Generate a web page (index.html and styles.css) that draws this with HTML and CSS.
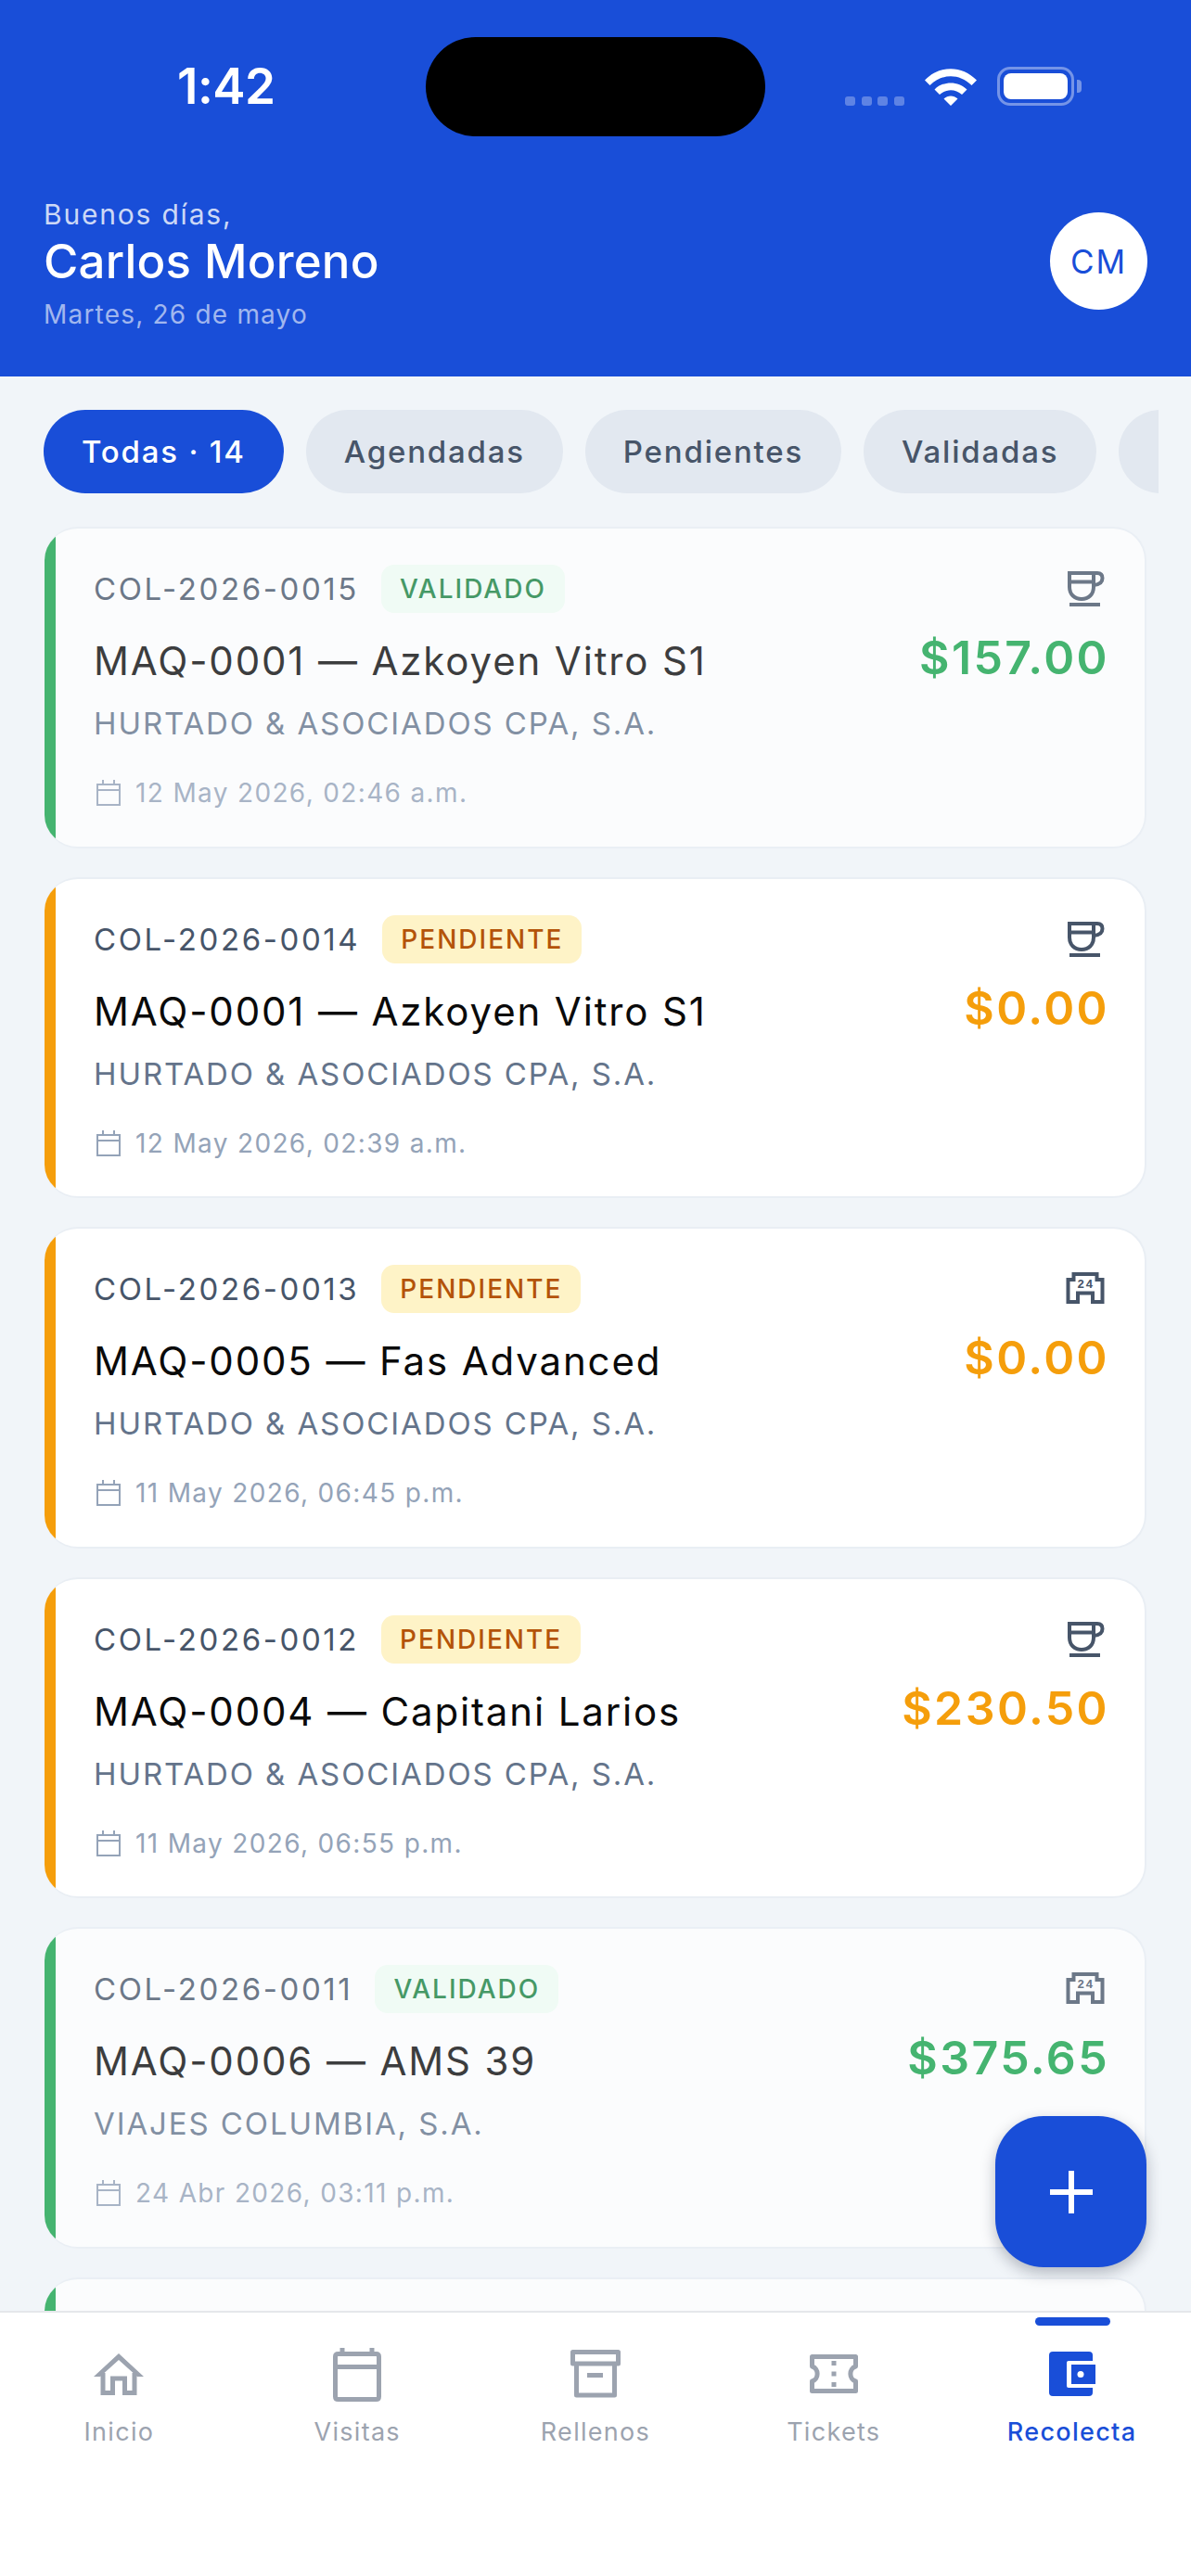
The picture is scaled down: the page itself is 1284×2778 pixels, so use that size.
FILE: index.html
```html
<!DOCTYPE html>
<html lang="es">
<head>
    <meta charset="utf-8">
    <title>Recolecta</title>
    <link rel="stylesheet" href="styles.css">
</head>
<body>
    <svg class="icon-defs" width="0" height="0">
        <symbol id="cup" viewBox="0 0 44 44">
            <path d="M5 5H31V20C31 28 25.500 33 18 33C10.500 33 5 28 5 20Z M5 14.500H31 M31 5H35C38.500 5 40.500 7 40.500 10.500C40.500 14.500 37.500 17.500 31 18" fill="none" stroke="currentColor" stroke-width="4"/>
            <rect x="5" y="37" width="33" height="4" fill="currentColor"/>
        </symbol>
        <symbol id="calendar" viewBox="0 0 28 30">
            <path d="M2 6H26V28H2Z M2 12H26 M8 1V6 M20 1V6" fill="none" stroke="currentColor" stroke-width="2"/>
        </symbol>
    </svg>

    <div class="phone">
        <header class="header">
            <div class="status">
                <div class="status-time">1:42</div>
                <div class="island"></div>
                <div class="status-icons">
                    <div class="dots"><span></span><span></span><span></span><span></span></div>
                    <svg class="wifi" width="56" height="40" viewBox="0 0 56 40">
                        <path d="M0 12.500C16 -4 40 -4 56 12.500L50.500 18C37 5 19 5 5.500 18Z M10.500 22.500C20 13 36 13 45.500 22.500L40 28C33 21.500 23 21.500 16 28Z M20.500 32.500C25 28.500 31 28.500 35.500 32.500L28 40Z" fill="#fff"/>
                    </svg>
                    <div class="battery"><div class="battery-fill"></div></div>
                    <div class="battery-nub"></div>
                </div>
            </div>
            <div class="greeting">
                <div>
                    <div class="greeting-hello">Buenos días,</div>
                    <div class="greeting-name">Carlos Moreno</div>
                    <div class="greeting-date">Martes, 26 de mayo</div>
                </div>
                <div class="avatar">CM</div>
            </div>
        </header>

        <main class="content">
            <div class="chips">
                <div class="chip chip-active">Todas · 14</div>
                <div class="chip">Agendadas</div>
                <div class="chip">Pendientes</div>
                <div class="chip">Validadas</div>
                <div class="chip chip-more"></div>
            </div>

            <div class="list">
                <article class="card card-validated">
                    <div class="card-stripe"></div>
                    <div class="card-body">
                        <div class="card-main">
                            <div class="card-top">
                                <span class="card-id">COL-2026-0015</span>
                                <span class="badge badge-validated">VALIDADO</span>
                            </div>
                            <div class="card-title">MAQ-0001 — Azkoyen Vitro S1</div>
                            <div class="card-company">HURTADO &amp; ASOCIADOS CPA, S.A.</div>
                            <div class="card-date">
                                <svg class="date-icon"><use href="#calendar"/></svg>
                                12 May 2026, 02:46 a.m.
                            </div>
                        </div>
                        <div class="card-side">
                            <svg class="type-icon"><use href="#cup"/></svg>
                            <div class="amount">$157.00</div>
                        </div>
                    </div>
                </article>

                <article class="card card-pending">
                    <div class="card-stripe"></div>
                    <div class="card-body">
                        <div class="card-main">
                            <div class="card-top">
                                <span class="card-id">COL-2026-0014</span>
                                <span class="badge badge-pending">PENDIENTE</span>
                            </div>
                            <div class="card-title">MAQ-0001 — Azkoyen Vitro S1</div>
                            <div class="card-company">HURTADO &amp; ASOCIADOS CPA, S.A.</div>
                            <div class="card-date">
                                <svg class="date-icon"><use href="#calendar"/></svg>
                                12 May 2026, 02:39 a.m.
                            </div>
                        </div>
                        <div class="card-side">
                            <svg class="type-icon"><use href="#cup"/></svg>
                            <div class="amount">$0.00</div>
                        </div>
                    </div>
                </article>

                <article class="card card-pending">
                    <div class="card-stripe"></div>
                    <div class="card-body">
                        <div class="card-main">
                            <div class="card-top">
                                <span class="card-id">COL-2026-0013</span>
                                <span class="badge badge-pending">PENDIENTE</span>
                            </div>
                            <div class="card-title">MAQ-0005 — Fas Advanced</div>
                            <div class="card-company">HURTADO &amp; ASOCIADOS CPA, S.A.</div>
                            <div class="card-date">
                                <svg class="date-icon"><use href="#calendar"/></svg>
                                11 May 2026, 06:45 p.m.
                            </div>
                        </div>
                        <div class="card-side">
                            <svg class="type-icon" viewBox="0 0 44 44">
                                <path d="M9.500 6H34.500V12H40.500V36H30V26.500H14V36H3.500V12H9.500Z" fill="none" stroke="currentColor" stroke-width="4"/>
                                <text x="22.500" y="21" text-anchor="middle" class="store-hours">24</text>
                            </svg>
                            <div class="amount">$0.00</div>
                        </div>
                    </div>
                </article>

                <article class="card card-pending">
                    <div class="card-stripe"></div>
                    <div class="card-body">
                        <div class="card-main">
                            <div class="card-top">
                                <span class="card-id">COL-2026-0012</span>
                                <span class="badge badge-pending">PENDIENTE</span>
                            </div>
                            <div class="card-title">MAQ-0004 — Capitani Larios</div>
                            <div class="card-company">HURTADO &amp; ASOCIADOS CPA, S.A.</div>
                            <div class="card-date">
                                <svg class="date-icon"><use href="#calendar"/></svg>
                                11 May 2026, 06:55 p.m.
                            </div>
                        </div>
                        <div class="card-side">
                            <svg class="type-icon"><use href="#cup"/></svg>
                            <div class="amount">$230.50</div>
                        </div>
                    </div>
                </article>

                <article class="card card-validated">
                    <div class="card-stripe"></div>
                    <div class="card-body">
                        <div class="card-main">
                            <div class="card-top">
                                <span class="card-id">COL-2026-0011</span>
                                <span class="badge badge-validated">VALIDADO</span>
                            </div>
                            <div class="card-title">MAQ-0006 — AMS 39</div>
                            <div class="card-company">VIAJES COLUMBIA, S.A.</div>
                            <div class="card-date">
                                <svg class="date-icon"><use href="#calendar"/></svg>
                                24 Abr 2026, 03:11 p.m.
                            </div>
                        </div>
                        <div class="card-side">
                            <svg class="type-icon" viewBox="0 0 44 44">
                                <path d="M9.500 6H34.500V12H40.500V36H30V26.500H14V36H3.500V12H9.500Z" fill="none" stroke="currentColor" stroke-width="4"/>
                                <text x="22.500" y="21" text-anchor="middle" class="store-hours">24</text>
                            </svg>
                            <div class="amount">$375.65</div>
                        </div>
                    </div>
                </article>

                <article class="card card-validated">
                    <div class="card-stripe"></div>
                </article>
            </div>

            <button class="fab">
                <svg width="46" height="46" viewBox="0 0 46 46"><path d="M23 0V46 M0 23H46" stroke="#fff" stroke-width="6"/></svg>
            </button>
        </main>

        <nav class="nav">
            <div class="nav-item">
                <svg class="nav-icon" viewBox="0 0 60 60">
                    <path d="M13 29V50.500H23.500V35H36.500V50.500H47V29" fill="none" stroke="currentColor" stroke-width="5"/>
                    <path d="M30 8L57 33H50L30 15L10 33H3Z" fill="currentColor"/>
                </svg>
                <span>Inicio</span>
            </div>
            <div class="nav-item">
                <svg class="nav-icon" viewBox="0 0 60 60">
                    <path d="M6.500 11.500Q6.500 8.500 9.500 8.500H50.500Q53.500 8.500 53.500 11.500V54.500Q53.500 57.500 50.500 57.500H9.500Q6.500 57.500 6.500 54.500Z M6.500 22.500H53.500 M14 2V8 M46 2V8" fill="none" stroke="currentColor" stroke-width="5"/>
                </svg>
                <span>Visitas</span>
            </div>
            <div class="nav-item">
                <svg class="nav-icon" viewBox="0 0 60 60">
                    <path d="M5.500 6.500H54.500V19H5.500Z M9.500 19V53H50.500V19" fill="none" stroke="currentColor" stroke-width="5" stroke-linejoin="round"/>
                    <rect x="21" y="29" width="17" height="5" fill="currentColor"/>
                </svg>
                <span>Rellenos</span>
            </div>
            <div class="nav-item">
                <svg class="nav-icon" viewBox="0 0 60 60">
                    <path d="M6.500 11.500H53.500V22C46 24 46 36 53.500 38V48.500H6.500V38C14 36 14 24 6.500 22Z" fill="none" stroke="currentColor" stroke-width="5" stroke-linejoin="round"/>
                    <rect x="27.500" y="16" width="5" height="5" fill="currentColor"/>
                    <rect x="27.500" y="27.500" width="5" height="5" fill="currentColor"/>
                    <rect x="27.500" y="39" width="5" height="5" fill="currentColor"/>
                </svg>
                <span>Tickets</span>
            </div>
            <div class="nav-item nav-item-active">
                <div class="nav-indicator"></div>
                <svg class="nav-icon" viewBox="0 0 60 60">
                    <rect x="5" y="6" width="47" height="48" rx="4" fill="currentColor"/>
                    <rect x="24" y="16" width="31" height="29" rx="2" fill="#fff"/>
                    <rect x="29" y="20" width="26" height="21" fill="currentColor"/>
                    <circle cx="39" cy="30.500" r="3.500" fill="#fff"/>
                </svg>
                <span>Recolecta</span>
            </div>
        </nav>
    </div>
</body>
</html>
```

FILE: styles.css
```css
* {
    box-sizing: border-box;
}
body {
    margin: 0;
    font-family: Inter, "Noto Sans", sans-serif;
    background-color: #f1f5f9;
}
.icon-defs {
    display: block;
    height: 0;
}
.store-hours {
    font-family: "Liberation Mono", monospace;
    font-size: 13px;
    font-weight: 700;
    letter-spacing: 1.500px;
    fill: currentColor;
}
.phone {
    position: relative;
    width: 1284px;
    height: 2778px;
    display: flex;
    flex-direction: column;
    overflow: hidden;
}

/* header */
.header {
    height: 406px;
    flex-shrink: 0;
    background-color: #194ed8;
    color: #fff;
    padding-top: 40px;
}
.status {
    display: flex;
    height: 107px;
}
.status-time {
    width: 459px;
    padding: 23px 0 0 191px;
    font-size: 53px;
    line-height: 60px;
    font-weight: 600;
    letter-spacing: -0.5px;
}
.island {
    width: 366px;
    height: 107px;
    border-radius: 54px;
    background-color: #000;
}
.status-icons {
    display: flex;
    align-items: flex-end;
    height: 74px;
    padding-left: 86px;
}
.dots {
    display: flex;
    gap: 6.5px;
    margin-right: 22px;
}
.dots span {
    width: 11px;
    height: 10px;
    border-radius: 3px;
    background-color: rgba(255, 255, 255, 0.3);
}
.wifi {
    margin-right: 22px;
}
.battery {
    width: 83px;
    height: 42px;
    padding: 4px;
    border: 3px solid rgba(255, 255, 255, 0.4);
    border-radius: 14px;
}
.battery-fill {
    height: 100%;
    border-radius: 8px;
    background-color: #fff;
}
.battery-nub {
    width: 5px;
    height: 14px;
    margin: 0 0 14px 3px;
    border-radius: 0 4px 4px 0;
    background-color: rgba(255, 255, 255, 0.4);
}
.greeting {
    display: flex;
    justify-content: space-between;
    align-items: flex-start;
    padding: 65px 47px 0;
}
.greeting-hello {
    font-size: 30px;
    line-height: 38px;
    letter-spacing: 1.800px;
    color: rgba(255, 255, 255, 0.8);
}
.greeting-name {
    font-size: 51px;
    line-height: 64px;
    font-weight: 450;
    letter-spacing: 0.2px;
}
.greeting-date {
    margin-top: 7px;
    font-size: 28px;
    line-height: 36px;
    letter-spacing: 1.200px;
    color: rgba(255, 255, 255, 0.6);
}
.avatar {
    width: 105px;
    height: 105px;
    margin-top: 17px;
    display: flex;
    align-items: center;
    justify-content: center;
    border-radius: 50%;
    background-color: #fff;
    color: #194ed8;
    font-size: 35px;
    letter-spacing: 2px;
}

/* filter chips */
.content {
    position: relative;
    flex: 1;
    overflow: hidden;
}
.chips {
    display: flex;
    gap: 24px;
    width: 1202px;
    margin: 36px 0 0 47px;
    overflow: hidden;
}
.chip {
    height: 90px;
    flex-shrink: 0;
    padding: 0 41px;
    display: flex;
    align-items: center;
    border-radius: 45px;
    background-color: #e2e8f0;
    color: #475569;
    font-size: 33px;
    font-weight: 450;
    letter-spacing: 1.800px;
}
.chip-active {
    background-color: #194ed8;
    color: #fff;
}
.chip-more {
    width: 200px;
}

/* cards */
.list {
    display: flex;
    flex-direction: column;
    gap: 31.1px;
    padding: 36px 48px 0;
}
.card {
    display: flex;
    flex-shrink: 0;
    height: 346.5px;
    border: 2px solid #e9eef4;
    border-left: none;
    border-radius: 36px;
    background-color: #fff;
    overflow: hidden;
}
.card-stripe {
    width: 12px;
    flex-shrink: 0;
}
.card-body {
    flex: 1;
    display: flex;
    justify-content: space-between;
    padding: 39px 38px 0 41px;
}
.card-validated {
    opacity: 0.78;
}
.card-validated .card-stripe {
    background-color: #16a34a;
}
.card-pending .card-stripe {
    background-color: #f59e0b;
}
.card-top {
    display: flex;
    align-items: center;
    gap: 24px;
    height: 52px;
}
.card-id {
    font-size: 33px;
    letter-spacing: 2.600px;
    color: #475569;
}
.badge {
    height: 52px;
    padding: 0 20px;
    display: flex;
    align-items: center;
    border-radius: 14px;
    font-size: 28px;
    font-weight: 450;
    letter-spacing: 2px;
}
.badge-validated {
    background-color: #f0fdf4;
    color: #15803d;
}
.badge-pending {
    background-color: #fef3c7;
    color: #b45309;
}
.card-title {
    margin-top: 24px;
    font-size: 42px;
    line-height: 56px;
    font-weight: 420;
    letter-spacing: 1.850px;
    color: #0a0a0a;
}
.card-company {
    margin-top: 18px;
    font-size: 33px;
    line-height: 42px;
    letter-spacing: 1.900px;
    color: #64748b;
}
.card-date {
    display: flex;
    align-items: center;
    gap: 15px;
    height: 40px;
    margin-top: 34px;
    font-size: 28px;
    letter-spacing: 1.350px;
    color: #94a3b8;
}
.date-icon {
    width: 28px;
    height: 30px;
    margin-left: 2px;
}
.card-side {
    display: flex;
    flex-direction: column;
    align-items: flex-end;
}
.type-icon {
    width: 44px;
    height: 44px;
    color: #475569;
    margin: 4px 4px 0 0;
}
.amount {
    margin-top: 22px;
    font-size: 50px;
    line-height: 60px;
    font-weight: 570;
    letter-spacing: 2.400px;
}
.card-validated .amount {
    color: #16a34a;
}
.card-pending .amount {
    color: #f59e0b;
}

/* floating button */
.fab {
    position: absolute;
    left: 1073px;
    bottom: 47px;
    width: 163px;
    height: 163px;
    padding: 0;
    display: flex;
    align-items: center;
    justify-content: center;
    border: none;
    border-radius: 52px;
    background-color: #194ed8;
    box-shadow: 0 6px 16px rgba(15, 23, 42, 0.28);
}

/* bottom nav */
.nav {
    display: grid;
    grid-template-columns: repeat(5, 1fr);
    height: 286px;
    flex-shrink: 0;
    border-top: 2px solid #e5e7eb;
    background-color: #fff;
}
.nav-item {
    position: relative;
    display: flex;
    flex-direction: column;
    align-items: center;
    padding-top: 36px;
    color: #9ca3af;
    font-size: 27px;
    letter-spacing: 1.300px;
}
.nav-item span {
    margin-top: 13px;
    line-height: 40px;
}
.nav-icon {
    width: 60px;
    height: 60px;
}
.nav-item-active {
    color: #194ed8;
    font-weight: 450;
}
.nav-indicator {
    position: absolute;
    top: 5px;
    left: 50%;
    width: 81px;
    height: 9px;
    margin-left: -40px;
    border-radius: 5px;
    background-color: #194ed8;
}
```
